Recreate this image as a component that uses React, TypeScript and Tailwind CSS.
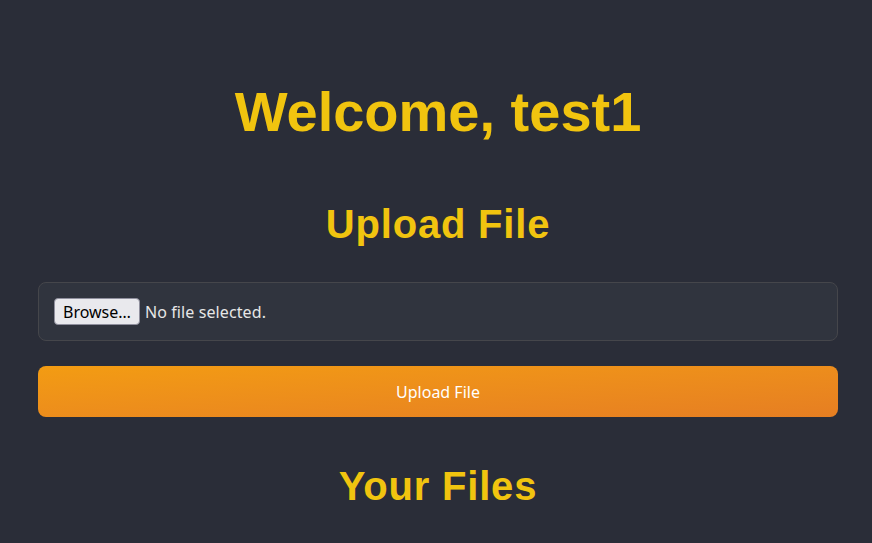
import React from "react";

const App: React.FC = () => {
  return (
    <div className="min-h-screen bg-[#2a2d38] pl-[38px] pr-[34px] pt-[78px] font-['Noto_Sans',sans-serif]">
      <div className="max-w-[800px] mx-auto">
        <h1 className="text-center text-[56px] leading-[67px] font-bold text-[#f1c40f] font-['Liberation_Sans',Arial,sans-serif]">
          Welcome, test1
        </h1>

        <h2 className="mt-[55px] text-center text-[40px] leading-[48px] font-bold tracking-[0.8px] text-[#f1c40f] font-['Liberation_Sans',Arial,sans-serif]">
          Upload File
        </h2>

        <form className="mt-[34px]" onSubmit={(e) => e.preventDefault()}>
          <label className="flex items-center gap-[5px] bg-[#30343e] border border-[#45464b] rounded-lg p-[15px] cursor-pointer">
            <span className="h-[27px] px-[8px] flex items-center bg-[#e9e9ed] border border-[#8f8f9d] rounded-[4px] text-[16px] text-black">
              Browse…
            </span>
            <span className="text-[16px] tracking-[0.1px] text-[#e6e6e6]">No file selected.</span>
            <input type="file" className="hidden" />
          </label>

          <button
            type="submit"
            className="mt-[25px] w-full h-[51px] rounded-lg bg-gradient-to-br from-[#f39c12] to-[#e67e22] text-white text-[16px]"
          >
            Upload File
          </button>
        </form>

        <h2 className="mt-[45px] text-center text-[40px] leading-[48px] font-bold tracking-[0.8px] text-[#f1c40f] font-['Liberation_Sans',Arial,sans-serif]">
          Your Files
        </h2>
      </div>
    </div>
  );
};

export default App;
